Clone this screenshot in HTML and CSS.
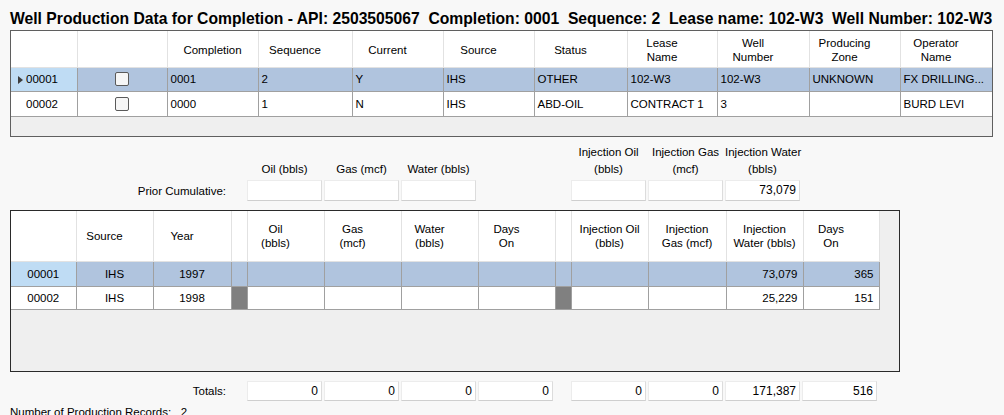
FILE: index.html
```html
<!DOCTYPE html>
<html>
<head>
<meta charset="utf-8">
<link rel="stylesheet" href="styles.css">
</head>
<body>
<div class="title">Well Production Data for Completion - API: 2503505067  Completion: 0001  Sequence: 2  Lease name: 102-W3  Well Number: 102-W3</div>

<div class="grid grid-top">
  <table class="tbl">
    <colgroup>
      <col style="width:66px"><col style="width:90px"><col style="width:91px"><col style="width:94px"><col style="width:91px"><col style="width:91px"><col style="width:93px"><col style="width:90px"><col style="width:92px"><col style="width:91px"><col style="width:92px">
    </colgroup>
    <thead>
      <tr class="hrow-top">
        <th class="nopad"></th>
        <th class="nopad"></th>
        <th class="nopad">Completion</th>
        <th>Sequence</th>
        <th>Current</th>
        <th>Source</th>
        <th>Status</th>
        <th>Lease<br>Name</th>
        <th>Well<br>Number</th>
        <th>Producing<br>Zone</th>
        <th>Operator<br>Name</th>
      </tr>
    </thead>
    <tbody>
      <tr class="sel r1">
        <td class="rh rh-sel"><span class="arrow"></span>00001</td>
        <td class="chk"><span class="cb"></span></td>
        <td>0001</td>
        <td>2</td>
        <td>Y</td>
        <td>IHS</td>
        <td>OTHER</td>
        <td>102-W3</td>
        <td>102-W3</td>
        <td>UNKNOWN</td>
        <td>FX DRILLING...</td>
      </tr>
      <tr class="r2">
        <td class="rh">00002</td>
        <td class="chk"><span class="cb"></span></td>
        <td>0000</td>
        <td>1</td>
        <td>N</td>
        <td>IHS</td>
        <td>ABD-OIL</td>
        <td>CONTRACT 1</td>
        <td>3</td>
        <td></td>
        <td>BURD LEVI</td>
      </tr>
    </tbody>
  </table>
</div>

<div class="fields fields-cum">
  <div class="flabel-main">Prior Cumulative:</div>
  <div class="field"><div class="fl">Oil (bbls)</div><div class="box"></div></div>
  <div class="field"><div class="fl">Gas (mcf)</div><div class="box"></div></div>
  <div class="field"><div class="fl">Water (bbls)</div><div class="box"></div></div>
  <div class="gap-cum"></div>
  <div class="field"><div class="fl">Injection Oil<br>(bbls)</div><div class="box"></div></div>
  <div class="field"><div class="fl">Injection Gas<br>(mcf)</div><div class="box"></div></div>
  <div class="field"><div class="fl">Injection Water<br>(bbls)</div><div class="box">73,079</div></div>
</div>

<div class="grid grid-bottom">
  <table class="tbl tbl-b">
    <colgroup>
      <col style="width:65px"><col style="width:77px"><col style="width:78px"><col style="width:16px"><col style="width:77px"><col style="width:77px"><col style="width:77px"><col style="width:77px"><col style="width:16px"><col style="width:77px"><col style="width:78px"><col style="width:77px"><col style="width:76px">
    </colgroup>
    <thead>
      <tr class="hrow-bot">
        <th class="nopad"></th>
        <th>Source</th>
        <th>Year</th>
        <th class="nopad"></th>
        <th>Oil<br>(bbls)</th>
        <th>Gas<br>(mcf)</th>
        <th>Water<br>(bbls)</th>
        <th>Days<br>On</th>
        <th class="nopad"></th>
        <th class="nopad">Injection Oil<br>(bbls)</th>
        <th class="nopad">Injection<br>Gas (mcf)</th>
        <th class="nopad">Injection<br>Water (bbls)</th>
        <th>Days<br>On</th>
      </tr>
    </thead>
    <tbody>
      <tr class="sel b1">
        <td class="rh rh-sel c">00001</td>
        <td class="c">IHS</td>
        <td class="c">1997</td>
        <td class="narrow"></td>
        <td></td><td></td><td></td><td></td>
        <td class="narrow"></td>
        <td></td><td></td>
        <td class="num">73,079</td>
        <td class="num">365</td>
      </tr>
      <tr class="b2">
        <td class="rh c">00002</td>
        <td class="c">IHS</td>
        <td class="c">1998</td>
        <td class="narrow dark"></td>
        <td></td><td></td><td></td><td></td>
        <td class="narrow dark"></td>
        <td></td><td></td>
        <td class="num">25,229</td>
        <td class="num">151</td>
      </tr>
    </tbody>
  </table>
</div>

<div class="fields fields-tot">
  <div class="flabel-main">Totals:</div>
  <div class="field"><div class="box">0</div></div>
  <div class="field"><div class="box">0</div></div>
  <div class="field"><div class="box">0</div></div>
  <div class="field"><div class="box">0</div></div>
  <div class="gap-tot"></div>
  <div class="field"><div class="box">0</div></div>
  <div class="field"><div class="box">0</div></div>
  <div class="field"><div class="box">171,387</div></div>
  <div class="field"><div class="box">516</div></div>
</div>

<div class="records">Number of Production Records:   2</div>
</body>
</html>
```

FILE: styles.css
```css
html, body {
  margin: 0;
  padding: 0;
}
body {
  background: #f8f8f8;
  font-family: "Liberation Sans", Arial, sans-serif;
  font-size: 11.5px;
  color: #000;
  width: 1004px;
  height: 415px;
  overflow: hidden;
}
.title {
  font-weight: bold;
  font-size: 15.7px;
  line-height: 17px;
  height: 30px;
  box-sizing: border-box;
  padding: 10px 0 0 10px;
  white-space: pre;
  color: #000;
}
.grid {
  margin-left: 10px;
  background: #efefef;
  box-sizing: border-box;
  overflow: hidden;
}
.grid-top {
  width: 983px;
  height: 107px;
  border: 1px solid #5f5f5f;
}
.grid-bottom {
  width: 890px;
  height: 162px;
  border: 1px solid #2a2a2a;
}
.tbl {
  border-collapse: collapse;
  table-layout: fixed;
  width: 981px;
}
.tbl-b {
  width: 868px;
}
.tbl th {
  background: #fff;
  font-weight: normal;
  text-align: center;
  padding: 0 20px 0 0;
  line-height: 14px;
  border-right: 1px solid #e2e2e2;
  border-bottom: 1px solid #e2e2e2;
  white-space: nowrap;
  overflow: hidden;
}
.hrow-top th {
  padding-top: 3px;
}
.tbl th.nopad {
  padding-right: 0;
}
.hrow-top {
  height: 36px;
}
.hrow-bot {
  height: 50px;
}
.tbl td {
  background: #fff;
  padding: 0 3px;
  border-right: 1px solid #a0a0a0;
  border-bottom: 1px solid #a0a0a0;
  white-space: nowrap;
  overflow: hidden;
  line-height: 14px;
}
.r1 { height: 24px; }
.r2 { height: 25px; }
.b1 { height: 25px; }
.b2 { height: 23px; }
.tbl tr.sel td {
  background: #b0c4de;
}
.tbl tr td.rh {
  background: #fff;
  padding: 0 0 0 15px;
  border-right: 1px solid #a0a0a0;
}
.tbl tr td.rh.c {
  padding: 0;
  text-align: center;
}
.tbl tr.sel td.rh-sel {
  background: #bfdcf4;
}
.arrow {
  display: inline-block;
  width: 0;
  height: 0;
  border-top: 4px solid transparent;
  border-bottom: 4px solid transparent;
  border-left: 5px solid #3c3c3c;
  margin-left: -8px;
  margin-right: 3px;
  vertical-align: -1px;
}
.chk {
  text-align: center;
}
.tbl td.chk {
  padding: 0;
}
.cb {
  display: inline-block;
  width: 12px;
  height: 12px;
  border: 1px solid #5a5a5a;
  border-radius: 2px;
  background: #f6f6f6;
  vertical-align: middle;
}
.tbl td.c {
  text-align: center;
  padding: 0;
}
.tbl td.num {
  text-align: right;
  padding-right: 5px;
}
.tbl td.narrow {
  padding: 0;
}
.tbl tr td.dark {
  background: #808080;
}
.fields {
  display: flex;
  align-items: flex-end;
}
.fields-cum {
  height: 64px;
  margin-top: 0;
  margin-bottom: 9px;
}
.fields-tot {
  margin-top: 9px;
  height: 20px;
}
.flabel-main {
  width: 247px;
  box-sizing: border-box;
  padding-right: 21px;
  text-align: right;
  line-height: 20px;
  flex: none;
}
.field {
  width: 77px;
  flex: none;
  display: flex;
  flex-direction: column;
}
.fl {
  width: 75px;
  text-align: center;
  line-height: 17px;
  margin-bottom: 2px;
  white-space: nowrap;
}
.box {
  width: 75px;
  height: 21px;
  box-sizing: border-box;
  background: #fff;
  border: 1px solid #ececec;
  border-bottom-color: #cfcfcf;
  border-right-color: #dcdcdc;
  text-align: right;
  padding-right: 3px;
  line-height: 19px;
  font-size: 12px;
}
.fields-tot .box {
  height: 20px;
  line-height: 18px;
}
.gap-cum {
  width: 93px;
  flex: none;
}
.gap-tot {
  width: 16px;
  flex: none;
}
.records {
  margin-top: 4px;
  padding-left: 10px;
  font-size: 11.5px;
  line-height: 14px;
  white-space: pre;
}
```
